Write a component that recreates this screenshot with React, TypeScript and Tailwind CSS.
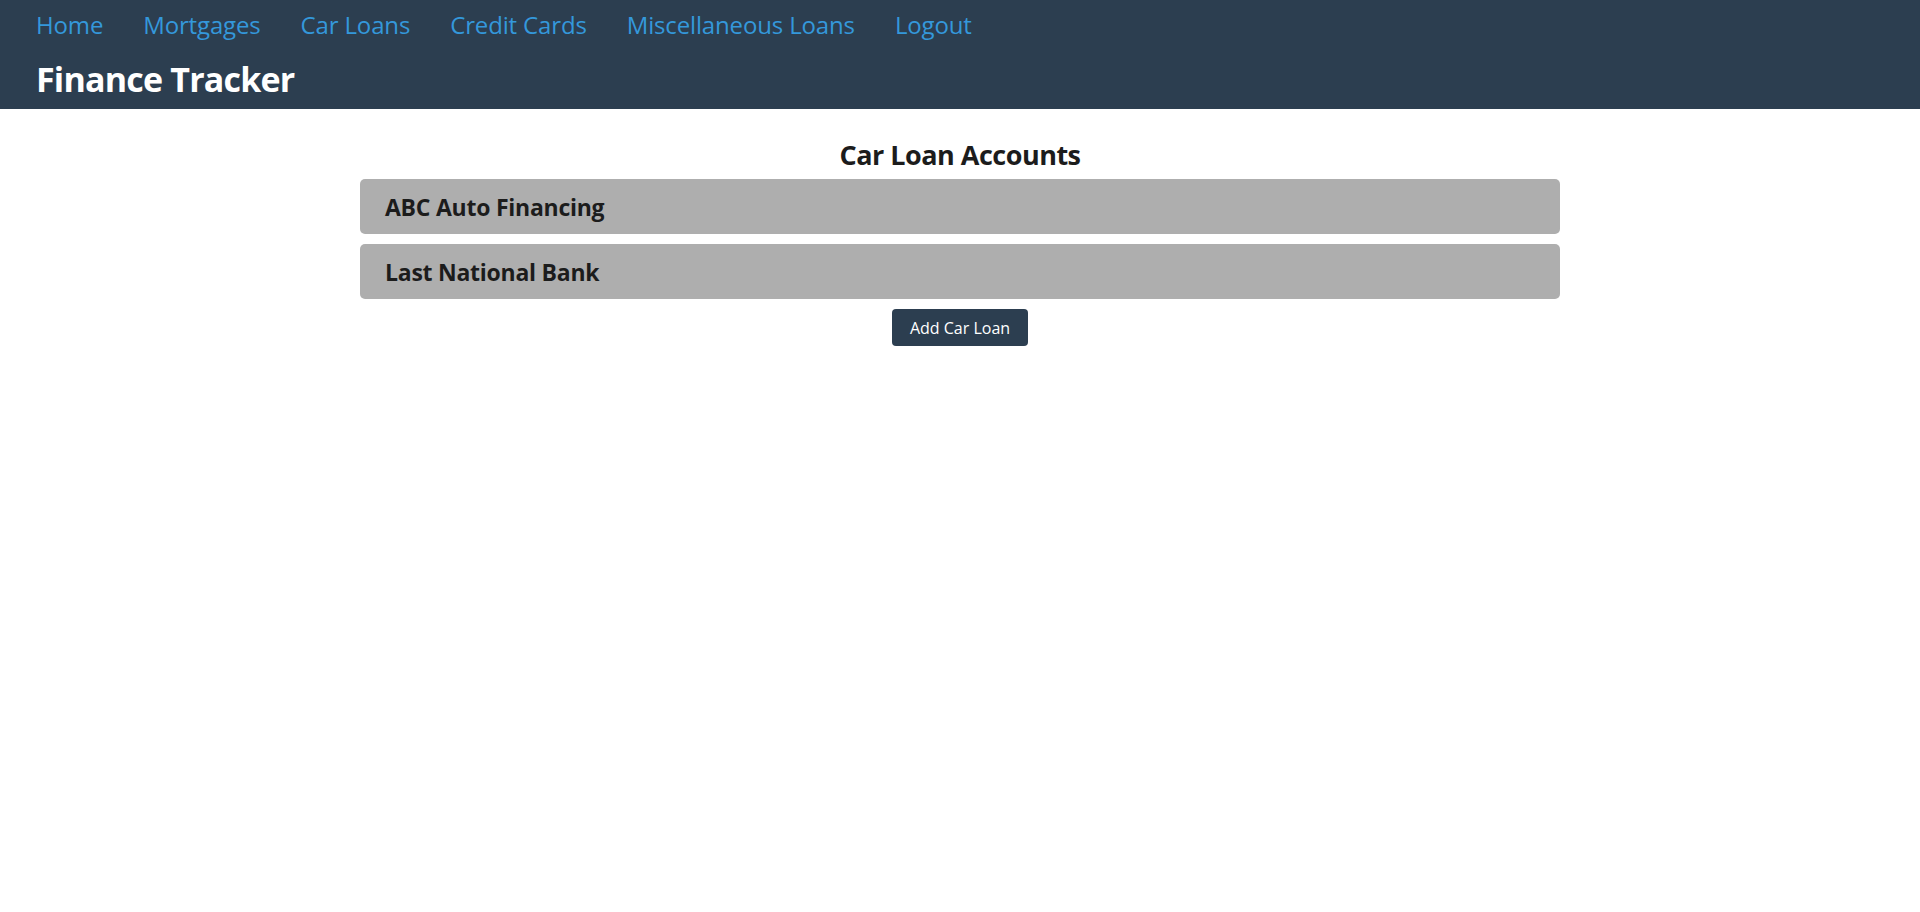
import React from "react";

const navLinks = ["Home", "Mortgages", "Car Loans", "Credit Cards", "Miscellaneous Loans", "Logout"];

const accounts = ["ABC Auto Financing", "Last National Bank"];

export default function App() {
  return (
    <div className="min-h-screen bg-white font-['Open_Sans',sans-serif] text-[#1c1c1c]">
      {/* Header */}
      <header className="h-[109px] bg-[#2c3e50] pl-[36px]">
        <nav className="flex gap-[40px] pt-[9px] text-[24px] leading-[32px] tracking-[-0.15px]">
          {navLinks.map((link) => (
            <a key={link} href="#" className="text-[#3498db]">
              {link}
            </a>
          ))}
        </nav>
        <h1 className="mt-[16px] text-[34px] font-bold leading-[44px] tracking-[-0.8px] text-white">
          Finance Tracker
        </h1>
      </header>

      {/* Accounts */}
      <main className="mx-auto w-[1200px] pt-[28px]">
        <h2 className="text-center text-[27px] font-bold leading-[36px] tracking-[-0.5px]">Car Loan Accounts</h2>
        <div className="mt-[6px] flex flex-col gap-[10px]">
          {accounts.map((name) => (
            <div key={name} className="rounded-[5px] bg-[#aeaeae] px-[25px] pt-[12px] pb-[11px]">
              <h3 className="text-[23px] font-bold leading-[32px] tracking-[-0.25px]">{name}</h3>
            </div>
          ))}
        </div>
        <div className="mt-[10px] flex justify-center">
          <button className="h-[37px] w-[136px] rounded-[4px] bg-[#2c3e50] text-[16px] text-white">
            Add Car Loan
          </button>
        </div>
      </main>
    </div>
  );
}
